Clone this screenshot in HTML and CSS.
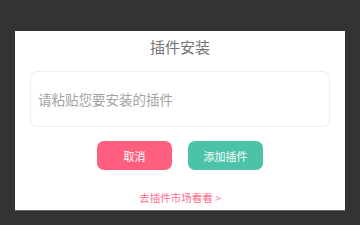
FILE: index.html
```html
<!DOCTYPE html>
<html>
<head>
  <meta charset="UTF-8" />
  <link rel="stylesheet" href="styles.css">
</head>
<body>
  <div class="dialog">
    <h1 class="title">插件安装</h1>
    <div class="paste-box">
      <textarea class="paste-input" placeholder="请粘贴您要安装的插件"></textarea>
    </div>
    <div class="actions">
      <button class="button cancel">取消</button>
      <button class="button confirm">添加插件</button>
    </div>
    <a class="market-link" href="#">去插件市场看看 &gt;</a>
  </div>
</body>
</html>
```

FILE: styles.css
```css
:root {
  --bg-dark: #333333;
  --pink: #fe5f7f;
  --green: #4cc3a9;
  --link-color: #ff6d8e;
  --text-title: #737373;
  --text-hint: #a3a3a3;
  --border-color: #efefef;
}

html, body {
  margin: 0;
  padding: 0;
}

body {
  width: 360px;
  height: 225px;
  background: var(--bg-dark);
  font-family: "Noto Sans CJK SC", "Noto Sans", sans-serif;
  overflow: hidden;
}

.dialog {
  margin: 31px 15px 0;
  width: 330px;
  height: 180px;
  box-sizing: border-box;
  background: #fff;
  border-bottom: 1px solid #6a6a6a;
  padding-top: 5px;
  display: flex;
  flex-direction: column;
  align-items: center;
}

.title {
  margin: 0;
  font-size: 15px;
  line-height: 21px;
  font-weight: 400;
  color: var(--text-title);
}

.paste-box {
  margin-top: 14px;
  width: 300px;
  height: 56px;
  box-sizing: border-box;
  border: 1px solid var(--border-color);
  border-radius: 7px;
  display: flex;
  align-items: center;
  padding: 0 7px;
}

.paste-input {
  width: 100%;
  height: 20px;
  border: none;
  outline: none;
  resize: none;
  padding: 0;
  font-family: inherit;
  font-size: 13.5px;
  line-height: 20px;
  color: #333;
  overflow: hidden;
}

.paste-input::placeholder {
  color: var(--text-hint);
}

.actions {
  margin-top: 14px;
  display: flex;
  gap: 16px;
}

.button {
  width: 75px;
  height: 29px;
  border: none;
  border-radius: 7px;
  color: #fff;
  font-family: inherit;
  font-size: 11px;
  padding: 0;
  cursor: pointer;
}

.button.cancel {
  background: var(--pink);
}

.button.confirm {
  background: var(--green);
}

.market-link {
  margin-top: 20px;
  font-size: 10.5px;
  line-height: 15px;
  color: var(--link-color);
  text-decoration: none;
}
```
